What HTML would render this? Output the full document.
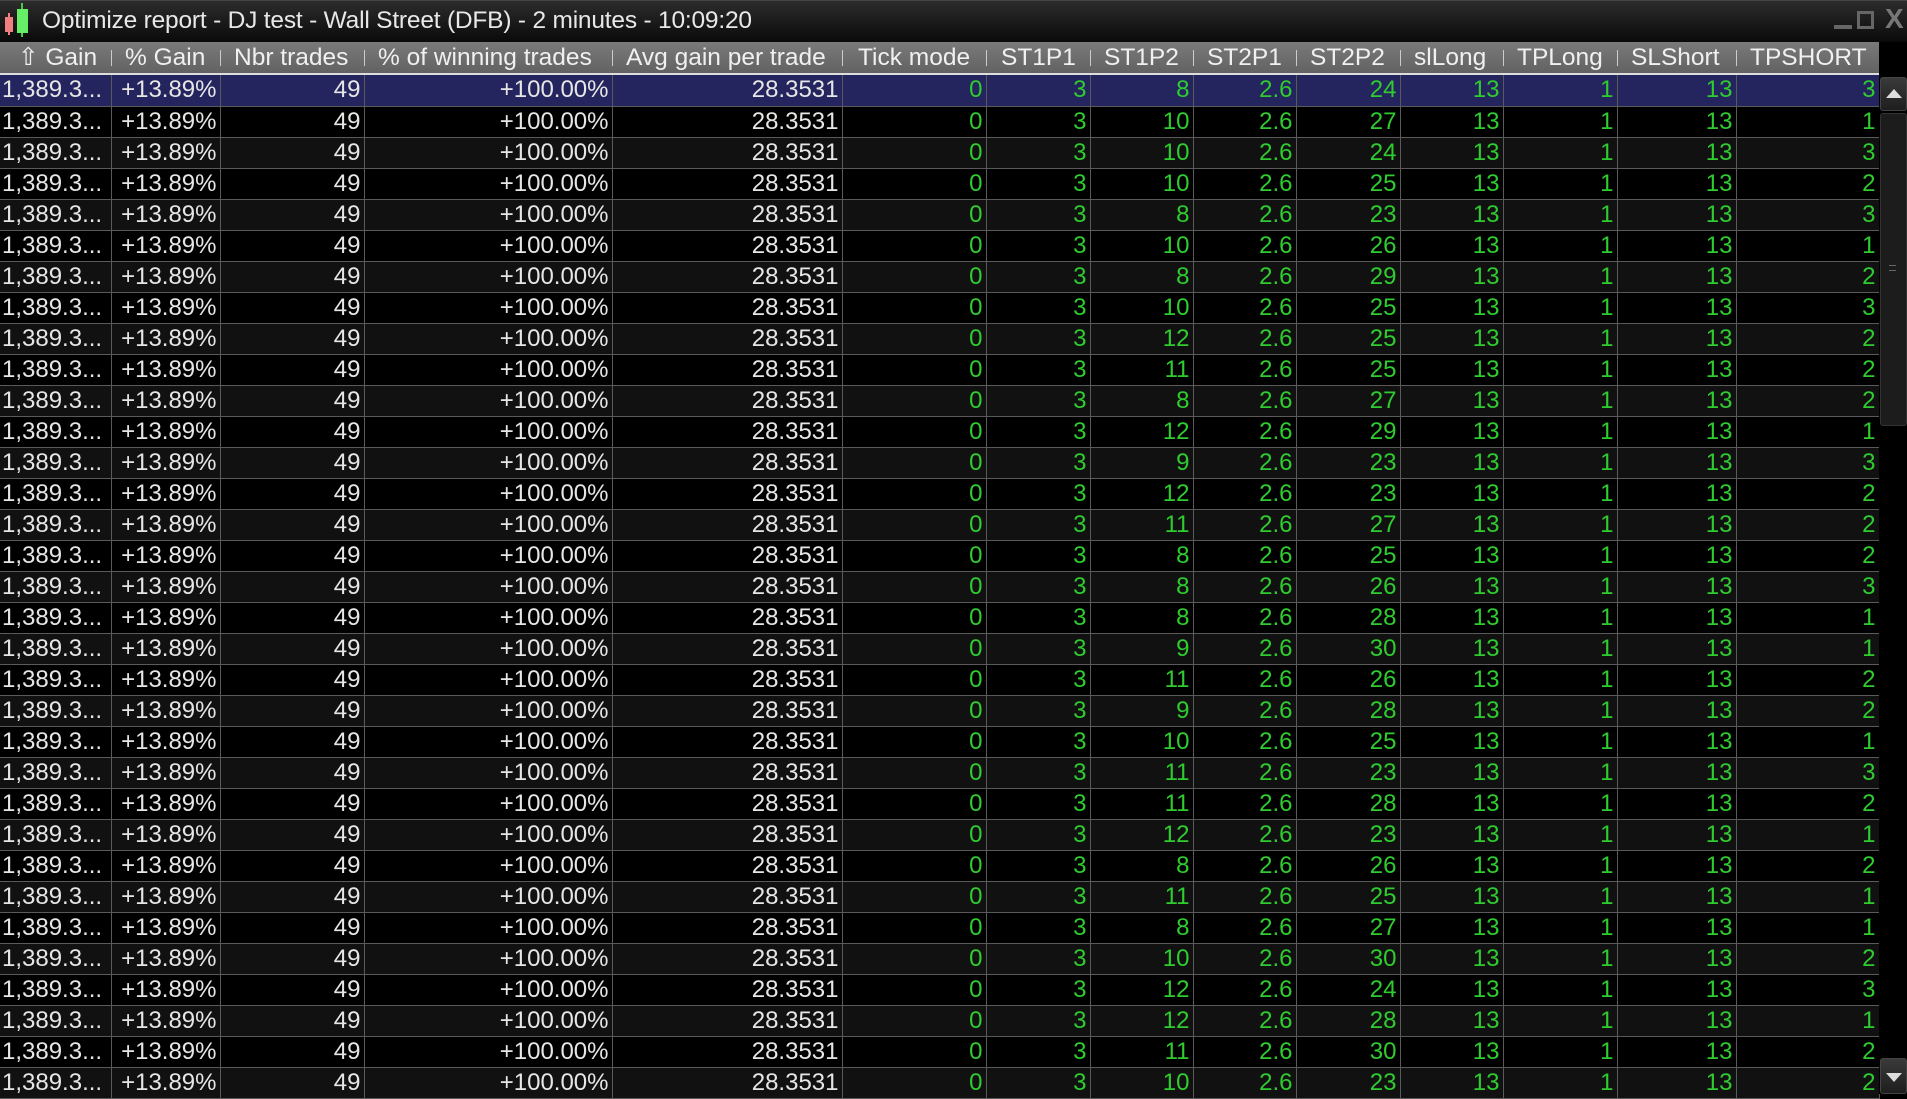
<!DOCTYPE html>
<html><head><meta charset="utf-8"><style>
*{margin:0;padding:0;box-sizing:border-box}
body{width:1907px;height:1094px;background:#000;overflow:hidden;font-family:"Liberation Sans",Arial,sans-serif;position:relative}
#title{position:absolute;left:0;top:0;width:1907px;height:42px;background:linear-gradient(#2c2c2c,#0a0a0a);border-top:1px solid #444}
#title span{position:absolute;left:42px;top:6px;font-size:24.5px;color:#e8e8e8;letter-spacing:-0.2px}
#hdr{position:absolute;left:0;top:42px;width:1879px;height:33px;background:linear-gradient(#7a7a7a,#626262);border-bottom:2px solid #ddd}
#hdr div{position:absolute;top:0;height:31px;line-height:31px;font-size:24.5px;color:#f0f0f0;white-space:nowrap}
#hdr i{position:absolute;top:8px;width:1px;height:16px;background:#ccc}
table{position:absolute;left:0;top:75px;border-collapse:collapse;table-layout:fixed;width:1879px}
td{height:31px;border:1px solid #5a5a5a;border-top:none;font-size:24px;text-align:right;padding:0 3px 0 0;color:#e6e6e6;white-space:nowrap;overflow:hidden;line-height:30px}
td:first-child{text-align:left;padding-left:2px;border-left:none}
tr:nth-child(odd) td{background:#111}
tr:nth-child(even) td{background:#000}
tr.sel td{background:#24245e}
td:nth-child(n+6){color:#2fcc2f}
#sb{position:absolute;left:1879px;top:75px;width:28px;height:1019px;background:#000}
</style></head><body>
<div id="title">
<svg width="40" height="40" style="position:absolute;left:2px;top:0">
<rect x="3" y="16" width="8" height="15" fill="#f08080"/><line x1="7" y1="12" x2="7" y2="34" stroke="#f08080" stroke-width="2"/>
<line x1="20" y1="2" x2="20" y2="36" stroke="#4c4" stroke-width="2"/><rect x="15" y="8" width="11" height="24" fill="#6e6"/></svg>
<span>Optimize report - DJ test - Wall Street (DFB) - 2 minutes - 10:09:20</span>
<div style="position:absolute;left:1834px;top:24px;width:18px;height:4px;background:#666"></div>
<div style="position:absolute;left:1857px;top:10px;width:17px;height:18px;border:3px solid #666"></div>
<div style="position:absolute;left:1885px;top:2px;font-size:28px;color:#777;font-weight:bold">X</div>
</div>
<div id="hdr">
<div style="left:18px">&#8679; Gain</div><i style="left:111px"></i>
<div style="left:125px">% Gain</div><i style="left:220px"></i>
<div style="left:234px">Nbr trades</div><i style="left:364px"></i>
<div style="left:378px">% of winning trades</div><i style="left:612px"></i>
<div style="left:626px">Avg gain per trade</div><i style="left:842px"></i>
<div style="left:858px">Tick mode</div><i style="left:986px"></i>
<div style="left:1001px">ST1P1</div><i style="left:1090px"></i>
<div style="left:1104px">ST1P2</div><i style="left:1193px"></i>
<div style="left:1207px">ST2P1</div><i style="left:1296px"></i>
<div style="left:1310px">ST2P2</div><i style="left:1400px"></i>
<div style="left:1414px">slLong</div><i style="left:1503px"></i>
<div style="left:1517px">TPLong</div><i style="left:1617px"></i>
<div style="left:1631px">SLShort</div><i style="left:1736px"></i>
<div style="left:1750px">TPSHORT</div>
</div>
<table>
<colgroup><col style="width:111px"><col style="width:109px"><col style="width:144px"><col style="width:248px"><col style="width:230px"><col style="width:144px"><col style="width:104px"><col style="width:103px"><col style="width:103px"><col style="width:104px"><col style="width:103px"><col style="width:114px"><col style="width:119px"><col style="width:143px"></colgroup>
<tr class="sel"><td>1,389.3...</td><td>+13.89%</td><td>49</td><td>+100.00%</td><td>28.3531</td><td>0</td><td>3</td><td>8</td><td>2.6</td><td>24</td><td>13</td><td>1</td><td>13</td><td>3</td></tr>
<tr><td>1,389.3...</td><td>+13.89%</td><td>49</td><td>+100.00%</td><td>28.3531</td><td>0</td><td>3</td><td>10</td><td>2.6</td><td>27</td><td>13</td><td>1</td><td>13</td><td>1</td></tr>
<tr><td>1,389.3...</td><td>+13.89%</td><td>49</td><td>+100.00%</td><td>28.3531</td><td>0</td><td>3</td><td>10</td><td>2.6</td><td>24</td><td>13</td><td>1</td><td>13</td><td>3</td></tr>
<tr><td>1,389.3...</td><td>+13.89%</td><td>49</td><td>+100.00%</td><td>28.3531</td><td>0</td><td>3</td><td>10</td><td>2.6</td><td>25</td><td>13</td><td>1</td><td>13</td><td>2</td></tr>
<tr><td>1,389.3...</td><td>+13.89%</td><td>49</td><td>+100.00%</td><td>28.3531</td><td>0</td><td>3</td><td>8</td><td>2.6</td><td>23</td><td>13</td><td>1</td><td>13</td><td>3</td></tr>
<tr><td>1,389.3...</td><td>+13.89%</td><td>49</td><td>+100.00%</td><td>28.3531</td><td>0</td><td>3</td><td>10</td><td>2.6</td><td>26</td><td>13</td><td>1</td><td>13</td><td>1</td></tr>
<tr><td>1,389.3...</td><td>+13.89%</td><td>49</td><td>+100.00%</td><td>28.3531</td><td>0</td><td>3</td><td>8</td><td>2.6</td><td>29</td><td>13</td><td>1</td><td>13</td><td>2</td></tr>
<tr><td>1,389.3...</td><td>+13.89%</td><td>49</td><td>+100.00%</td><td>28.3531</td><td>0</td><td>3</td><td>10</td><td>2.6</td><td>25</td><td>13</td><td>1</td><td>13</td><td>3</td></tr>
<tr><td>1,389.3...</td><td>+13.89%</td><td>49</td><td>+100.00%</td><td>28.3531</td><td>0</td><td>3</td><td>12</td><td>2.6</td><td>25</td><td>13</td><td>1</td><td>13</td><td>2</td></tr>
<tr><td>1,389.3...</td><td>+13.89%</td><td>49</td><td>+100.00%</td><td>28.3531</td><td>0</td><td>3</td><td>11</td><td>2.6</td><td>25</td><td>13</td><td>1</td><td>13</td><td>2</td></tr>
<tr><td>1,389.3...</td><td>+13.89%</td><td>49</td><td>+100.00%</td><td>28.3531</td><td>0</td><td>3</td><td>8</td><td>2.6</td><td>27</td><td>13</td><td>1</td><td>13</td><td>2</td></tr>
<tr><td>1,389.3...</td><td>+13.89%</td><td>49</td><td>+100.00%</td><td>28.3531</td><td>0</td><td>3</td><td>12</td><td>2.6</td><td>29</td><td>13</td><td>1</td><td>13</td><td>1</td></tr>
<tr><td>1,389.3...</td><td>+13.89%</td><td>49</td><td>+100.00%</td><td>28.3531</td><td>0</td><td>3</td><td>9</td><td>2.6</td><td>23</td><td>13</td><td>1</td><td>13</td><td>3</td></tr>
<tr><td>1,389.3...</td><td>+13.89%</td><td>49</td><td>+100.00%</td><td>28.3531</td><td>0</td><td>3</td><td>12</td><td>2.6</td><td>23</td><td>13</td><td>1</td><td>13</td><td>2</td></tr>
<tr><td>1,389.3...</td><td>+13.89%</td><td>49</td><td>+100.00%</td><td>28.3531</td><td>0</td><td>3</td><td>11</td><td>2.6</td><td>27</td><td>13</td><td>1</td><td>13</td><td>2</td></tr>
<tr><td>1,389.3...</td><td>+13.89%</td><td>49</td><td>+100.00%</td><td>28.3531</td><td>0</td><td>3</td><td>8</td><td>2.6</td><td>25</td><td>13</td><td>1</td><td>13</td><td>2</td></tr>
<tr><td>1,389.3...</td><td>+13.89%</td><td>49</td><td>+100.00%</td><td>28.3531</td><td>0</td><td>3</td><td>8</td><td>2.6</td><td>26</td><td>13</td><td>1</td><td>13</td><td>3</td></tr>
<tr><td>1,389.3...</td><td>+13.89%</td><td>49</td><td>+100.00%</td><td>28.3531</td><td>0</td><td>3</td><td>8</td><td>2.6</td><td>28</td><td>13</td><td>1</td><td>13</td><td>1</td></tr>
<tr><td>1,389.3...</td><td>+13.89%</td><td>49</td><td>+100.00%</td><td>28.3531</td><td>0</td><td>3</td><td>9</td><td>2.6</td><td>30</td><td>13</td><td>1</td><td>13</td><td>1</td></tr>
<tr><td>1,389.3...</td><td>+13.89%</td><td>49</td><td>+100.00%</td><td>28.3531</td><td>0</td><td>3</td><td>11</td><td>2.6</td><td>26</td><td>13</td><td>1</td><td>13</td><td>2</td></tr>
<tr><td>1,389.3...</td><td>+13.89%</td><td>49</td><td>+100.00%</td><td>28.3531</td><td>0</td><td>3</td><td>9</td><td>2.6</td><td>28</td><td>13</td><td>1</td><td>13</td><td>2</td></tr>
<tr><td>1,389.3...</td><td>+13.89%</td><td>49</td><td>+100.00%</td><td>28.3531</td><td>0</td><td>3</td><td>10</td><td>2.6</td><td>25</td><td>13</td><td>1</td><td>13</td><td>1</td></tr>
<tr><td>1,389.3...</td><td>+13.89%</td><td>49</td><td>+100.00%</td><td>28.3531</td><td>0</td><td>3</td><td>11</td><td>2.6</td><td>23</td><td>13</td><td>1</td><td>13</td><td>3</td></tr>
<tr><td>1,389.3...</td><td>+13.89%</td><td>49</td><td>+100.00%</td><td>28.3531</td><td>0</td><td>3</td><td>11</td><td>2.6</td><td>28</td><td>13</td><td>1</td><td>13</td><td>2</td></tr>
<tr><td>1,389.3...</td><td>+13.89%</td><td>49</td><td>+100.00%</td><td>28.3531</td><td>0</td><td>3</td><td>12</td><td>2.6</td><td>23</td><td>13</td><td>1</td><td>13</td><td>1</td></tr>
<tr><td>1,389.3...</td><td>+13.89%</td><td>49</td><td>+100.00%</td><td>28.3531</td><td>0</td><td>3</td><td>8</td><td>2.6</td><td>26</td><td>13</td><td>1</td><td>13</td><td>2</td></tr>
<tr><td>1,389.3...</td><td>+13.89%</td><td>49</td><td>+100.00%</td><td>28.3531</td><td>0</td><td>3</td><td>11</td><td>2.6</td><td>25</td><td>13</td><td>1</td><td>13</td><td>1</td></tr>
<tr><td>1,389.3...</td><td>+13.89%</td><td>49</td><td>+100.00%</td><td>28.3531</td><td>0</td><td>3</td><td>8</td><td>2.6</td><td>27</td><td>13</td><td>1</td><td>13</td><td>1</td></tr>
<tr><td>1,389.3...</td><td>+13.89%</td><td>49</td><td>+100.00%</td><td>28.3531</td><td>0</td><td>3</td><td>10</td><td>2.6</td><td>30</td><td>13</td><td>1</td><td>13</td><td>2</td></tr>
<tr><td>1,389.3...</td><td>+13.89%</td><td>49</td><td>+100.00%</td><td>28.3531</td><td>0</td><td>3</td><td>12</td><td>2.6</td><td>24</td><td>13</td><td>1</td><td>13</td><td>3</td></tr>
<tr><td>1,389.3...</td><td>+13.89%</td><td>49</td><td>+100.00%</td><td>28.3531</td><td>0</td><td>3</td><td>12</td><td>2.6</td><td>28</td><td>13</td><td>1</td><td>13</td><td>1</td></tr>
<tr><td>1,389.3...</td><td>+13.89%</td><td>49</td><td>+100.00%</td><td>28.3531</td><td>0</td><td>3</td><td>11</td><td>2.6</td><td>30</td><td>13</td><td>1</td><td>13</td><td>2</td></tr>
<tr><td>1,389.3...</td><td>+13.89%</td><td>49</td><td>+100.00%</td><td>28.3531</td><td>0</td><td>3</td><td>10</td><td>2.6</td><td>23</td><td>13</td><td>1</td><td>13</td><td>2</td></tr>
</table>
<div id="sb">
<div style="position:absolute;left:1px;top:2px;width:27px;height:34px;background:linear-gradient(#3a3a3a,#1e1e1e);border:1px solid #444;border-radius:3px"></div>
<div style="position:absolute;left:7px;top:14px;width:0;height:0;border-left:8px solid transparent;border-right:8px solid transparent;border-bottom:9px solid #ddd"></div>
<div style="position:absolute;left:1px;top:38px;width:27px;height:313px;background:#1c1c1c;border:1px solid #333;border-radius:3px"></div>
<div style="position:absolute;left:10px;top:190px;width:7px;height:6px;border-top:1px solid #666;border-bottom:1px solid #666"></div>
<div style="position:absolute;left:1px;top:983px;width:27px;height:36px;background:linear-gradient(#3a3a3a,#1e1e1e);border:1px solid #444;border-radius:3px"></div>
<div style="position:absolute;left:7px;top:998px;width:0;height:0;border-left:8px solid transparent;border-right:8px solid transparent;border-top:9px solid #ddd"></div>
</div>
</body></html>
